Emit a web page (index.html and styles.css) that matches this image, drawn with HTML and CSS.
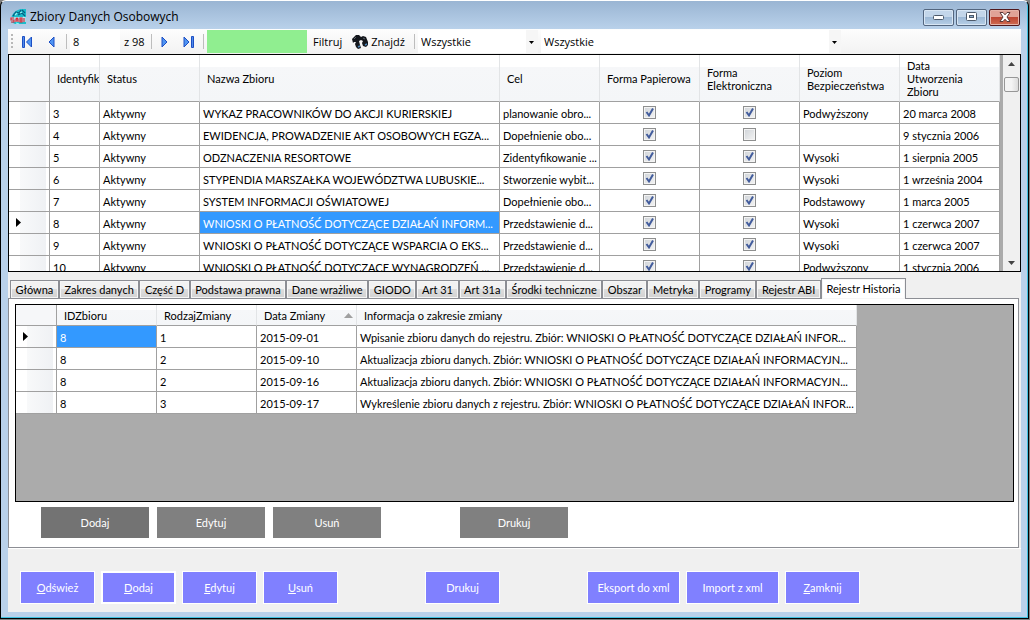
FILE: index.html
```html
<!DOCTYPE html>
<html lang="pl">
<head>
<meta charset="utf-8">
<title>Zbiory Danych Osobowych</title>
<link rel="stylesheet" href="styles.css">
</head>
<body>
<div class="window">
  <header class="titlebar">
    <svg class="app-icon" width="17" height="16" viewBox="0 0 17 16" aria-hidden="true">
      <path d="M1 10C2 4 6 1 11 0h5v15H5L1 13z" fill="#19bccb"/>
      <path d="M3 7l3-4 3 1 2-3M8 6l4-2 3 3M12 1l3 3" stroke="#075f80" stroke-width="1.3" fill="none"/>
      <path d="M5 6l2-2M10 4l2-1M13 8l2 1M6 14l3 1" stroke="#8ff5f5" stroke-width="1.2" fill="none"/>
      <path d="M1 8h15v5H1z" fill="#d4e6ee" opacity=".75"/>
      <path d="M4 9H1v2h3v2H1M6 13v-3l1-1 1 1v3M6 11h2M10 9v4h2v-4zM10 11h2M14 9v4" stroke="#e02030" stroke-width="1.1" fill="none"/>
    </svg>
    <h1 class="title">Zbiory Danych Osobowych</h1>
    <div class="window-buttons">
      <button class="win-btn" aria-label="Minimalizuj"><svg width="12" height="5" viewBox="0 0 12 5"><rect x=".5" y=".5" width="10" height="4" rx="1" fill="#fff" stroke="#4d5a6b"/></svg></button>
      <button class="win-btn" aria-label="Maksymalizuj"><svg width="11" height="10" viewBox="0 0 11 10"><rect x=".5" y=".5" width="10" height="8" rx="1" fill="#fff" stroke="#4d5a6b"/><rect x="3.5" y="3.5" width="4" height="2" fill="#8fb0d0" stroke="#4d5a6b"/></svg></button>
      <button class="win-btn win-close" aria-label="Zamknij okno"><svg width="12" height="10" viewBox="0 0 12 10"><path d="M1 .5h3l2 2.300 2-2.300h3L8 5l3 4.500H8L6 7.200 4 9.500H1L4 5z" fill="#fff" stroke="#5b3838"/></svg></button>
    </div>
  </header>

  <div class="client">
    <div class="toolbar">
      <span class="grip"></span>
      <button class="nav nav-first" aria-label="Pierwszy"><svg width="11" height="12" viewBox="0 0 11 12"><path d="M.5.5h2v11h-2z" fill="#4f8bea" stroke="#1d4fc4"/><path d="M9.500 1v10L4.500 6z" fill="#4f94f2" stroke="#1d4fc4"/></svg></button>
      <button class="nav nav-prev" aria-label="Poprzedni"><svg width="7" height="12" viewBox="0 0 7 12"><path d="M6 1v10L1 6z" fill="#4f94f2" stroke="#1d4fc4"/></svg></button>
      <span class="sep"></span>
      <input class="position" aria-label="Pozycja" value="8">
      <span class="count">z 98</span>
      <span class="sep"></span>
      <button class="nav nav-next" aria-label="Następny"><svg width="7" height="12" viewBox="0 0 7 12"><path d="M1 1v10l5-5z" fill="#4f94f2" stroke="#1d4fc4"/></svg></button>
      <button class="nav nav-last" aria-label="Ostatni"><svg width="11" height="12" viewBox="0 0 11 12"><path d="M1 1v10l5-5z" fill="#4f94f2" stroke="#1d4fc4"/><path d="M8.500.5h2v11h-2z" fill="#4f8bea" stroke="#1d4fc4"/></svg></button>
      <span class="sep"></span>
      <input class="filter" aria-label="Filtr">
      <button class="tool">Filtruj</button>
      <button class="tool tool-find"><svg width="16" height="15" viewBox="0 0 16 15" aria-hidden="true"><path d="M0 5l4-4h3l2 2 2-1 3 1 2 5v3l-2 2-3-1-1-3 1-2-2-1-2 1 1 4 1 3-3 1-2-2-1-3 1-2-2 0-1 1z" fill="#14171c"/><path d="M2 5l2-2M11 4l2 1" stroke="#5b646c" fill="none"/><path d="M6 13l2-1M13 11l2-1" stroke="#4d86b8" stroke-width="1.500"/></svg>Znajdź</button>
      <span class="sep"></span>
      <select class="combo combo-short" aria-label="Status"><option>Wszystkie</option></select>
      <select class="combo combo-long" aria-label="Zbiór"><option>Wszystkie</option></select>
    </div>

    <section class="main-grid">
      <div class="viewport">
        <table class="grid records">
          <colgroup><col class="c-head"><col class="c-id"><col class="c-std"><col class="c-name"><col class="c-std"><col class="c-std"><col class="c-std"><col class="c-std"><col class="c-std"></colgroup>
          <thead><tr><th></th><th>Identyfikator</th><th>Status</th><th>Nazwa Zbioru</th><th>Cel</th><th>Forma Papierowa</th><th>Forma<br>Elektroniczna</th><th>Poziom<br>Bezpieczeństwa</th><th>Data<br>Utworzenia<br>Zbioru</th></tr></thead>
          <tbody>
            <tr><th></th><td>3</td><td>Aktywny</td><td>WYKAZ PRACOWNIKÓW DO AKCJI KURIERSKIEJ</td><td>planowanie obro...</td><td class="tick"><input type="checkbox" aria-label="Forma papierowa" checked></td><td class="tick"><input type="checkbox" aria-label="Forma elektroniczna" checked></td><td>Podwyższony</td><td>20 marca 2008</td></tr>
            <tr><th></th><td>4</td><td>Aktywny</td><td>EWIDENCJA, PROWADZENIE AKT OSOBOWYCH EGZA...</td><td>Dopełnienie obo...</td><td class="tick"><input type="checkbox" aria-label="Forma papierowa" checked></td><td class="tick"><input type="checkbox" aria-label="Forma elektroniczna"></td><td></td><td>9 stycznia 2006</td></tr>
            <tr><th></th><td>5</td><td>Aktywny</td><td>ODZNACZENIA RESORTOWE</td><td>Zidentyfikowanie ...</td><td class="tick"><input type="checkbox" aria-label="Forma papierowa" checked></td><td class="tick"><input type="checkbox" aria-label="Forma elektroniczna" checked></td><td>Wysoki</td><td>1 sierpnia 2005</td></tr>
            <tr><th></th><td>6</td><td>Aktywny</td><td>STYPENDIA MARSZAŁKA WOJEWÓDZTWA LUBUSKIE...</td><td>Stworzenie wybit...</td><td class="tick"><input type="checkbox" aria-label="Forma papierowa" checked></td><td class="tick"><input type="checkbox" aria-label="Forma elektroniczna" checked></td><td>Wysoki</td><td>1 września 2004</td></tr>
            <tr><th></th><td>7</td><td>Aktywny</td><td>SYSTEM INFORMACJI OŚWIATOWEJ</td><td>Dopełnienie obo...</td><td class="tick"><input type="checkbox" aria-label="Forma papierowa" checked></td><td class="tick"><input type="checkbox" aria-label="Forma elektroniczna" checked></td><td>Podstawowy</td><td>1 marca 2005</td></tr>
            <tr><th class="current"></th><td>8</td><td>Aktywny</td><td class="selected">WNIOSKI O PŁATNOŚĆ DOTYCZĄCE DZIAŁAŃ INFORM...</td><td>Przedstawienie d...</td><td class="tick"><input type="checkbox" aria-label="Forma papierowa" checked></td><td class="tick"><input type="checkbox" aria-label="Forma elektroniczna" checked></td><td>Wysoki</td><td>1 czerwca 2007</td></tr>
            <tr><th></th><td>9</td><td>Aktywny</td><td>WNIOSKI O PŁATNOŚĆ DOTYCZĄCE WSPARCIA O EKS...</td><td>Przedstawienie d...</td><td class="tick"><input type="checkbox" aria-label="Forma papierowa" checked></td><td class="tick"><input type="checkbox" aria-label="Forma elektroniczna" checked></td><td>Wysoki</td><td>1 czerwca 2007</td></tr>
            <tr><th></th><td>10</td><td>Aktywny</td><td>WNIOSKI O PŁATNOŚĆ DOTYCZĄCE WYNAGRODZEŃ ...</td><td>Przedstawienie d...</td><td class="tick"><input type="checkbox" aria-label="Forma papierowa" checked></td><td class="tick"><input type="checkbox" aria-label="Forma elektroniczna" checked></td><td>Podwyższony</td><td>1 stycznia 2006</td></tr>
          </tbody>
        </table>
      </div>
      <div class="scrollbar">
        <svg class="up" width="7" height="4" viewBox="0 0 7 4"><path d="M0 4l3.500-4L7 4z" fill="#444"/></svg>
        <span class="thumb"></span>
        <svg class="down" width="7" height="4" viewBox="0 0 7 4"><path d="M0 0l3.500 4L7 0z" fill="#444"/></svg>
      </div>
    </section>

    <nav class="tabs" role="tablist">
      <button class="tab" role="tab">Główna</button>
      <button class="tab" role="tab">Zakres danych</button>
      <button class="tab" role="tab">Część D</button>
      <button class="tab" role="tab">Podstawa prawna</button>
      <button class="tab" role="tab">Dane wrażliwe</button>
      <button class="tab" role="tab">GIODO</button>
      <button class="tab" role="tab">Art 31</button>
      <button class="tab" role="tab">Art 31a</button>
      <button class="tab" role="tab">Środki techniczne</button>
      <button class="tab" role="tab">Obszar</button>
      <button class="tab" role="tab">Metryka</button>
      <button class="tab" role="tab">Programy</button>
      <button class="tab" role="tab">Rejestr ABI</button>
      <button class="tab tab-active" role="tab" aria-selected="true">Rejestr Historia</button>
    </nav>

    <section class="tab-page">
      <div class="history">
        <table class="grid changes">
          <colgroup><col class="c-head"><col class="c-std"><col class="c-std"><col class="c-std"><col class="c-info"></colgroup>
          <thead><tr><th></th><th>IDZbioru</th><th>RodzajZmiany</th><th class="sorted">Data Zmiany</th><th>Informacja o zakresie zmiany</th></tr></thead>
          <tbody>
            <tr><th class="current"></th><td class="selected">8</td><td>1</td><td>2015-09-01</td><td>Wpisanie zbioru danych do rejestru. Zbiór: WNIOSKI O PŁATNOŚĆ DOTYCZĄCE DZIAŁAŃ INFOR...</td></tr>
            <tr><th></th><td>8</td><td>2</td><td>2015-09-10</td><td>Aktualizacja zbioru danych. Zbiór: WNIOSKI O PŁATNOŚĆ DOTYCZĄCE DZIAŁAŃ INFORMACYJN...</td></tr>
            <tr><th></th><td>8</td><td>2</td><td>2015-09-16</td><td>Aktualizacja zbioru danych. Zbiór: WNIOSKI O PŁATNOŚĆ DOTYCZĄCE DZIAŁAŃ INFORMACYJN...</td></tr>
            <tr><th></th><td>8</td><td>3</td><td>2015-09-17</td><td>Wykreślenie zbioru danych z rejestru. Zbiór: WNIOSKI O PŁATNOŚĆ DOTYCZĄCE DZIAŁAŃ INFOR...</td></tr>
          </tbody>
        </table>
      </div>
      <div class="page-actions">
        <button class="gray gray-hot">Dodaj</button>
        <button class="gray">Edytuj</button>
        <button class="gray">Usuń</button>
        <button class="gray gray-print">Drukuj</button>
      </div>
    </section>

    <footer class="actions">
      <button class="blue"><u>O</u>dśwież</button>
      <button class="blue blue-default"><u>D</u>odaj</button>
      <button class="blue"><u>E</u>dytuj</button>
      <button class="blue"><u>U</u>suń</button>
      <button class="blue apart">Drukuj</button>
      <button class="blue wide apart">Eksport do xml</button>
      <button class="blue wide">Import z xml</button>
      <button class="blue"><u>Z</u>amknij</button>
    </footer>
  </div>
</div>
</body>
</html>
```
FILE: styles.css
```css
* { box-sizing: border-box; }

body {
  margin: 0;
  background: #808080;
  color: #000;
  font: 11px/13px Lato, "Liberation Sans", Arial, sans-serif;
}

button, input, select {
  margin: 0;
  padding: 0;
  border: 0;
  border-radius: 0;
  background: none;
  color: inherit;
  font: inherit;
}

svg { display: block; }

/* Window frame */
.window {
  display: flex;
  flex-direction: column;
  height: calc(100vh - 1px);
  margin-right: 1px;
  padding: 0 7px 6px 6px;
  border: 1px solid #000;
  border-top-color: #fff;
  border-radius: 6px 6px 0 0;
  background: linear-gradient(#9ab5d3, #b9d1ea 28px);
  box-shadow: inset -1px -1px #3fc1e0;
}

.titlebar {
  display: flex;
  flex: none;
  height: 28px;
  align-items: center;
  padding: 4px 1px 0 3px;
  gap: 3px;
}

.title {
  flex: 1;
  margin: 0;
  font: 12px/16px "Open Sans", sans-serif;
}

.window-buttons { display: flex; gap: 2px; }

.win-btn {
  display: flex;
  width: 31px;
  height: 17px;
  align-items: center;
  justify-content: center;
  border: 1px solid #53667f;
  border-radius: 2px;
  background: linear-gradient(#c3d6ea 50%, #9db9d6 50%, #b6cee6);
  box-shadow: inset 0 0 0 1px #d8e6f4;
}

.win-close {
  border-color: #50181c;
  background: linear-gradient(#e0a296 50%, #bd4632 50%, #cf6c52);
  box-shadow: inset 0 0 0 1px #e5b3a8;
}

.client {
  display: flex;
  flex: 1;
  flex-direction: column;
  min-height: 0;
  margin-left: 1px;
  background: #f0f0f0;
}

/* Toolbar */
.toolbar {
  display: flex;
  flex: none;
  height: 25px;
  align-items: center;
  padding-left: 3px;
  background: linear-gradient(#fdfdfd, #f2f2f2);
  font: 11px/16px "Open Sans", sans-serif;
}

.grip {
  width: 2px;
  height: 15px;
  background: repeating-linear-gradient(#b8b8b8 0 2px, transparent 2px 4px);
}

.nav-first { margin-left: 9px; }
.nav-prev { margin: 0 11px 0 15px; }
.nav-next { margin-left: 9px; }
.nav-last { margin: 0 9px 0 15px; }

.sep { width: 1px; height: 15px; background: #bdbdbd; }

.position { width: 50px; height: 23px; margin-left: 3px; padding-left: 3px; background: #fff; }
.count { width: 27px; margin-left: 4px; }
.filter { width: 100px; height: 23px; margin-left: 3px; background: #90ee90; }
.tool { display: flex; align-items: center; margin-left: 6px; gap: 3px; }
.tool-find { margin: 0 9px 0 10px; }

.combo {
  height: 23px;
  margin-left: 3px;
  padding-left: 3px;
  appearance: none;
  background: #fff url("data:image/svg+xml,%3Csvg xmlns='http://www.w3.org/2000/svg' width='12' height='23'%3E%3Cpath fill='%23f6f6f6' d='M0 0h12v23H0z'/%3E%3Cpath d='M3 11h5l-2.500 3z'/%3E%3C/svg%3E") no-repeat right;
}

.combo-short { width: 120px; }
.combo-long { width: 300px; }

/* Data grids */
.grid {
  table-layout: fixed;
  border-collapse: separate;
  border-spacing: 0;
  background: #fff;
}

.c-head { width: 40px; }
.c-id { width: 50px; }
.c-std { width: 100px; }
.c-info { width: 500px; }

.grid th, .grid td {
  overflow: hidden;
  height: 22px;
  padding: 1px 0 0 3px;
  border-right: 1px solid #a0a0a0;
  border-bottom: 1px solid #a0a0a0;
  font-weight: normal;
  text-align: left;
  vertical-align: middle;
  white-space: nowrap;
}

.grid thead th {
  padding-left: 7px;
  border-right-color: #e2e4e6;
  background: linear-gradient(#fff 25%, #f6f7f9 25%, #f4f6f8);
}

.grid thead th:first-child { border-right-color: #a0a0a0; background: #f6f7f9; }

.grid tbody th {
  background: linear-gradient(90deg, #fff 11px, #f8f9fa 11px, #eff1f4 37px, #fff 37px);
}

.grid tbody th.current {
  background:
    url("data:image/svg+xml,%3Csvg xmlns='http://www.w3.org/2000/svg' width='5' height='9'%3E%3Cpath d='M0 0l5 4.500L0 9z'/%3E%3C/svg%3E") no-repeat 7px center,
    linear-gradient(90deg, #fff 11px, #f8f9fa 11px, #eff1f4 37px, #fff 37px);
}

.grid td.selected { background: #3399ff; color: #fff; }
.grid td.tick { padding: 0; text-align: center; }

.tick input {
  display: block;
  width: 13px;
  height: 13px;
  margin: 0 auto;
  appearance: none;
  border: 1px solid #8e8f8f;
  background: linear-gradient(135deg, #cfd3d8, #f4f4f4);
  box-shadow: inset 0 0 0 1px #f4f4f4;
}

.tick input:checked {
  background: url("data:image/svg+xml,%3Csvg xmlns='http://www.w3.org/2000/svg' width='11' height='11'%3E%3Cpath d='M2.500 5l2.500 3.500L9 1.500' fill='none' stroke='%23425c9c' stroke-width='2'/%3E%3C/svg%3E"), linear-gradient(135deg, #cfd3d8, #f4f4f4);
}

.main-grid {
  display: flex;
  flex: none;
  height: calc(35vh + 1px);
  border: 1px solid #000;
}

.viewport {
  flex: 1;
  overflow: hidden;
  padding-right: 3px;
  background: #ababab;
}

.records { width: 100%; }
.records .c-head { width: 41px; }
.records thead th { height: 47px; }

.scrollbar {
  display: flex;
  flex-direction: column;
  align-items: center;
  width: 17px;
  padding: 7px 0 6px;
  background: #f0f0f0;
}

.thumb {
  width: 15px;
  height: 15px;
  margin-top: 11px;
  border: 1px solid #979797;
  border-radius: 2px;
  background: linear-gradient(90deg, #f4f4f4 50%, #dcdcdc);
}

.down { margin-top: auto; }

/* Tabs */
.tabs {
  display: flex;
  flex: none;
  align-items: flex-end;
  height: 26px;
  margin-right: 115px;
  padding-left: 2px;
}

.tab {
  flex: auto;
  height: 18px;
  padding: 0 4px;
  border: 1px solid #8c8e94;
  border-bottom: 0;
  background: linear-gradient(#f2f2f2 50%, #dddddd 50%, #d2d2d2);
  box-shadow: inset 0 0 0 1px #f6f6f6;
  white-space: nowrap;
}

.tab-active {
  z-index: 1;
  height: 21px;
  margin-bottom: -1px;
  padding: 0 4px 2px;
  background: #fff;
}

.tab-page {
  display: flex;
  flex: 1;
  flex-direction: column;
  min-height: 0;
  margin-right: 2px;
  padding: 5px 4px 9px 6px;
  border: 1px solid #8c8e94;
  background: #fff;
}

.history {
  flex: 1;
  overflow: hidden;
  border: 1px solid #000;
  background: #ababab;
}

.changes { width: 841px; }
.changes .c-head { width: 41px; }
.changes thead th { height: 21px; }

.grid th.sorted {
  background:
    url("data:image/svg+xml,%3Csvg xmlns='http://www.w3.org/2000/svg' width='9' height='5'%3E%3Cpath d='M0 5l4.500-5L9 5z' fill='%23a0a0a0'/%3E%3C/svg%3E") no-repeat right 3px center,
    linear-gradient(#fff 25%, #f6f7f9 25%, #f4f6f8);
}

.page-actions {
  display: flex;
  flex: none;
  padding: 5px 0 0 26px;
  gap: 8px;
}

.gray { width: 108px; height: 31px; background: #808080; color: #fff; }
.gray-hot { background: #737373; }
.gray-print { margin-left: 71px; }

/* Bottom buttons */
.actions {
  display: flex;
  flex: none;
  padding: 22px 12px 8px;
  border-top: 1px solid #fff;
  gap: 6px;
}

.blue {
  width: 75px;
  height: 33px;
  border: 1px solid #fff;
  background: #8080ff;
  color: #fff;
}

.blue-default { border-width: 2px; }
.wide { width: 93px; }
.apart { margin-left: 81px; }
```
